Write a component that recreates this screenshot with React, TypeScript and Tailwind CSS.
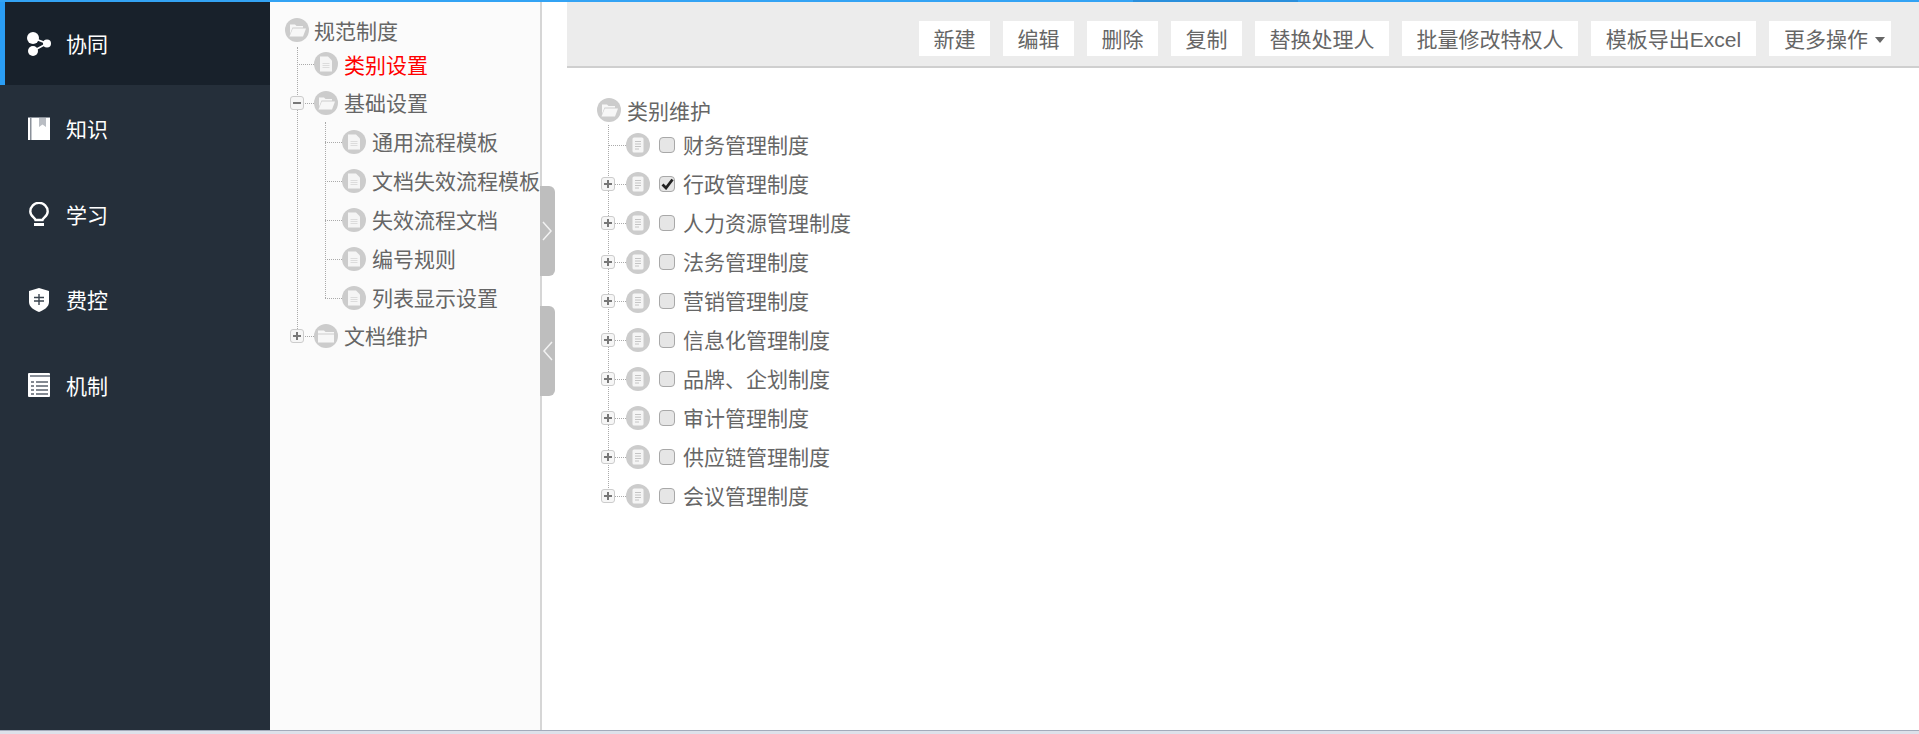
import React from 'react';

const navItems = [
  { label: '协同', icon: <ShareIcon />, active: true },
  { label: '知识', icon: <BookIcon /> },
  { label: '学习', icon: <BulbIcon /> },
  { label: '费控', icon: <ShieldIcon /> },
  { label: '机制', icon: <TableIcon /> },
];

const toolbarButtons = [
  { label: '新建', width: 'w-[71px]' },
  { label: '编辑', width: 'w-[71px]' },
  { label: '删除', width: 'w-[71px]' },
  { label: '复制', width: 'w-[71px]' },
  { label: '替换处理人', width: 'w-[134px]' },
  { label: '批量修改特权人', width: 'w-[176px]' },
  { label: '模板导出Excel', width: 'w-[165px]' },
];

const categories = [
  '财务管理制度',
  '行政管理制度',
  '人力资源管理制度',
  '法务管理制度',
  '营销管理制度',
  '信息化管理制度',
  '品牌、企划制度',
  '审计管理制度',
  '供应链管理制度',
  '会议管理制度',
];

function ShareIcon() {
  return (
    <svg width="24" height="24" viewBox="0 0 24 24" fill="white">
      <circle cx="6" cy="6" r="6" />
      <circle cx="6" cy="19" r="5" />
      <circle cx="20" cy="11.500" r="4" />
      <path d="M6 6 20 11.500 6 19" fill="none" stroke="white" strokeWidth="1.800" />
    </svg>
  );
}

function BookIcon() {
  return (
    <svg width="22" height="23" viewBox="0 0 22 23">
      <rect x="0" y="0" width="22" height="23" fill="white" />
      <rect x="2" y="0" width="1.500" height="23" fill="#8a9099" />
      <rect x="0" y="0" width="22" height="1" fill="#8a9099" />
      <path d="M11 1h7v9l-3.500-2.500L11 10z" fill="#b9bdc3" />
    </svg>
  );
}

function BulbIcon() {
  return (
    <svg width="20" height="24" viewBox="0 0 20 24" fill="none">
      <path d="M6.500 18C6 15.500 1.300 14.500 1.300 9.500a8.700 8.700 0 0 1 17.400 0c0 5-4.700 6-5.200 8.500z" stroke="white" strokeWidth="2.400" />
      <rect x="5" y="21" width="10" height="3" fill="white" />
    </svg>
  );
}

function ShieldIcon() {
  return (
    <svg width="20" height="24" viewBox="0 0 20 24">
      <path d="M10 0 20 3v11c0 5-5 8-10 10C5 22 0 19 0 14V3z" fill="white" />
      <path d="M5 9.500h10M5 13h10M10 6v11" stroke="#3a444f" strokeWidth="1.400" fill="none" />
    </svg>
  );
}

function TableIcon() {
  return (
    <svg width="22" height="24" viewBox="0 0 22 24">
      <rect x="0" y="0" width="22" height="24" rx="1" fill="white" />
      <rect x="2" y="2" width="20" height="2" fill="#8a9099" />
      <path d="M3 9h3M8 9h12M3 13h3M8 13h12M3 17h3M8 17h12M3 21h3M8 21h12" stroke="#5b636d" strokeWidth="1.500" />
    </svg>
  );
}

function TreeIcon({ kind }: { kind: 'folderOpen' | 'folder' | 'page' | 'note' }) {
  return (
    <svg width="24" height="24" viewBox="0 0 24 24" className="shrink-0">
      <circle cx="12" cy="12" r="12" fill="#cccccc" />
      {kind === 'folderOpen' && (
        <>
          <path d="M5 6.500h5l1.500 1.500H18v1.500H7.500L5 16z" fill="#f7f7f7" />
          <path d="M7.800 10.500H21l-3 8H4.500z" fill="#f7f7f7" />
        </>
      )}
      {kind === 'folder' && (
        <>
          <path d="M4 6.500h6L11.500 8H20v1.500H4z" fill="#f7f7f7" />
          <rect x="4" y="10.500" width="16" height="8" fill="#f7f7f7" />
        </>
      )}
      {kind === 'page' && (
        <>
          <path d="M6 4.500h8l4 4V19.500H6z" fill="#f5f5f5" />
          <path d="M8.500 11.500h7M8.500 13.500h7M8.500 15.500h7" stroke="#dcdcdc" strokeWidth="1" />
        </>
      )}
      {kind === 'note' && (
        <>
          <rect x="6.500" y="4.500" width="11" height="15" rx="1.500" fill="#f5f5f5" />
          <path d="M9 8.500h6M9 11h6M9 13.500h6M9 16h4" stroke="#c4c4c4" strokeWidth="1" />
        </>
      )}
    </svg>
  );
}

function Expander({ open }: { open?: boolean }) {
  return (
    <span className="absolute left-[-7px] top-1/2 z-10 flex h-[14px] w-[14px] -translate-y-1/2 items-center justify-center rounded-[3px] border border-[#cccccc] bg-[#f6f6f6]">
      <span className="relative block h-[8px] w-[8px]">
        <span className="absolute left-0 top-[3px] h-[2px] w-[8px] bg-[#777777]" />
        {!open && <span className="absolute left-[3px] top-0 h-[8px] w-[2px] bg-[#777777]" />}
      </span>
    </span>
  );
}

function SideRow({
  kind,
  label,
  height,
  red,
  expander,
}: {
  kind: 'folderOpen' | 'folder' | 'page';
  label: string;
  height: string;
  red?: boolean;
  expander?: 'open' | 'closed';
}) {
  return (
    <div className={`relative flex items-center ${height}`}>
      <span className="absolute left-0 top-1/2 w-[17px] border-t border-dotted border-[#aaaaaa]" />
      {expander && <Expander open={expander === 'open'} />}
      <div className="ml-[17px] flex items-center gap-[6px]">
        <TreeIcon kind={kind} />
        <span className={`whitespace-nowrap pt-[3px] ${red ? 'text-[#ff0000]' : ''}`}>{label}</span>
      </div>
    </div>
  );
}

function SideTree() {
  return (
    <aside className="relative w-[272px] shrink-0 border-r-2 border-[#d6d6d6] bg-[#fbfbfb] pl-[15px] pt-[14px] text-[21px] leading-[28px] text-[#666666]">
      <div className="flex h-[28px] items-center gap-[5px]">
        <TreeIcon kind="folderOpen" />
        <span className="pt-[3px]">规范制度</span>
      </div>
      <div className="relative ml-[12px] mt-[1px]">
        <span className="absolute bottom-[19px] left-0 top-[2px] border-l border-dotted border-[#aaaaaa]" />
        <SideRow kind="page" label="类别设置" height="h-[38px]" red />
        <SideRow kind="folderOpen" label="基础设置" height="h-[39px]" expander="open" />
        <div className="relative ml-[28px]">
          <span className="absolute bottom-[19px] left-0 top-0 border-l border-dotted border-[#aaaaaa]" />
          {['通用流程模板', '文档失效流程模板', '失效流程文档', '编号规则', '列表显示设置'].map((label) => (
            <SideRow key={label} kind="page" label={label} height="h-[39px]" />
          ))}
        </div>
        <SideRow kind="folder" label="文档维护" height="h-[37px]" expander="closed" />
      </div>
      <button className="absolute left-[270px] top-[184px] z-20 flex h-[90px] w-[15px] items-center justify-center rounded-r-[6px] bg-[#bebebe]">
        <svg width="11" height="20" viewBox="0 0 11 20" fill="none">
          <path d="M1 1l8 9-8 9" stroke="#f2f2f2" strokeWidth="1.500" />
        </svg>
      </button>
      <button className="absolute left-[270px] top-[304px] z-20 flex h-[90px] w-[15px] items-center justify-center rounded-r-[6px] bg-[#bebebe]">
        <svg width="11" height="20" viewBox="0 0 11 20" fill="none">
          <path d="M10 1l-8 9 8 9" stroke="#f2f2f2" strokeWidth="1.500" />
        </svg>
      </button>
    </aside>
  );
}

function Toolbar() {
  return (
    <div className="ml-[25px] flex h-[66px] shrink-0 items-start justify-end gap-[13px] border-b-2 border-[#cfcfcf] bg-[#ececec] pr-[28px] pt-[19px]">
      {toolbarButtons.map(({ label, width }) => (
        <button key={label} className={`flex h-[35px] items-center justify-center whitespace-nowrap bg-white pt-[2px] text-[21px] text-[#666666] ${width}`}>
          {label}
        </button>
      ))}
      <button className="flex h-[35px] w-[122px] items-center gap-[7px] whitespace-nowrap bg-white pl-[15px] pt-[2px] text-[21px] text-[#666666]">
        更多操作
        <span className="h-0 w-0 border-x-[5px] border-t-[6px] border-x-transparent border-t-[#666666]" />
      </button>
    </div>
  );
}

function Checkbox({ checked }: { checked?: boolean }) {
  return (
    <span className="flex h-[16px] w-[16px] shrink-0 items-center justify-center rounded-[4px] border border-[#a8a8a8] bg-[#e6e6e6]">
      {checked && (
        <svg width="13" height="12" viewBox="0 0 13 12" fill="none">
          <path d="M1.500 6.500 5 10l6.500-8.500" stroke="#222222" strokeWidth="2.800" />
        </svg>
      )}
    </span>
  );
}

function CategoryTree() {
  return (
    <div className="ml-[55px] mt-[28px] text-[21px] leading-[28px] text-[#666666]">
      <div className="flex h-[28px] items-center gap-[6px]">
        <TreeIcon kind="folderOpen" />
        <span className="pt-[3px]">类别维护</span>
      </div>
      <div className="relative ml-[11px] mt-[1px]">
        <span className="absolute bottom-[19px] left-0 top-0 border-l border-dotted border-[#aaaaaa]" />
        {categories.map((label, i) => (
          <div key={label} className="relative flex h-[39px] items-center">
            <span className="absolute left-0 top-1/2 w-[18px] border-t border-dotted border-[#aaaaaa]" />
            {i > 0 && <Expander />}
            <div className="ml-[18px] flex items-center">
              <TreeIcon kind="note" />
              <span className="ml-[9px] mr-[8px]">
                <Checkbox checked={i === 1} />
              </span>
              <span className="whitespace-nowrap pt-[3px]">{label}</span>
            </div>
          </div>
        ))}
      </div>
    </div>
  );
}

export default function App() {
  return (
    <div className="flex h-screen flex-col overflow-hidden bg-white font-['Liberation_Sans','Noto_Sans_CJK_SC',sans-serif]">
      <div className="flex h-[2px] shrink-0 bg-[#33a3f4]">
        <div className="ml-[1133px] w-[165px] bg-[#2a8fdc]" />
      </div>
      <div className="flex min-h-0 flex-1">
        <nav className="w-[270px] shrink-0 bg-[#252f3a] text-[21px] text-white">
          {navItems.map((item) => (
            <div
              key={item.label}
              className={
                item.active
                  ? 'flex h-[83px] items-center border-l-[5px] border-[#2a9df4] bg-[#18212b] pl-[21px]'
                  : 'flex h-[85.500px] items-center pl-[26px] pt-[2px]'
              }
            >
              <span className="flex w-[26px] justify-center">{item.icon}</span>
              <span className="ml-[14px] pt-[2px]">{item.label}</span>
            </div>
          ))}
        </nav>
        <SideTree />
        <main className="min-w-0 flex-1">
          <Toolbar />
          <CategoryTree />
        </main>
      </div>
      <div className="h-[4px] shrink-0 border-t border-[#a3abbb] bg-[#dde1ea]" />
    </div>
  );
}
